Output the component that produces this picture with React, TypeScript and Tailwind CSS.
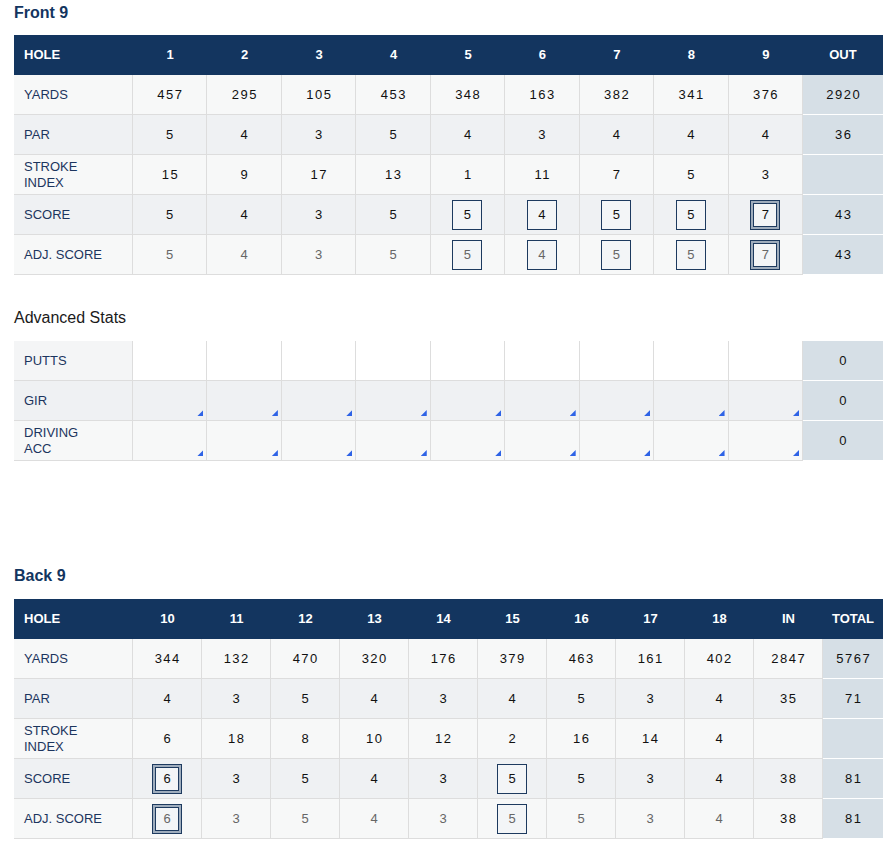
import React from "react";

const NAVY = "#13355f";

type Cell = { v?: string | number; box?: 0 | 1 | 2; tri?: boolean };

function ScoreBox({ v, kind, muted }: { v: string | number; kind: 1 | 2; muted: boolean }) {
  const txt = muted ? "text-[#666666]" : "text-[#111111]";
  if (kind === 1) {
    return (
      <div className={`w-[30px] h-[30px] border border-[#1d3a5f] bg-[#f3f5f7] flex items-center justify-center text-[13px] ${txt}`}>
        {v}
      </div>
    );
  }
  return (
    <div className="w-[30px] h-[30px] border border-[#1d3a5f] bg-[#9fadbd] p-[2px]">
      <div className={`w-full h-full border border-[#1d3a5f] bg-[#f3f5f7] flex items-center justify-center text-[13px] ${txt}`}>
        {v}
      </div>
    </div>
  );
}

function Header({ cols, labels, last }: { cols: string; labels: string[]; last: string }) {
  return (
    <div className={`grid ${cols} h-[40px] bg-[#13355f] text-white font-bold text-[13px]`}>
      <div className="flex items-center pl-[10px]">HOLE</div>
      {labels.map((l) => (
        <div key={l} className="flex items-center justify-center">{l}</div>
      ))}
      <div className="flex items-center justify-center">{last}</div>
    </div>
  );
}

function Row({
  cols,
  label,
  cells,
  total,
  dark,
  muted,
  lastShaded = true,
  extra,
  labelBg,
  cellBg,
}: {
  cols: string;
  label: React.ReactNode;
  cells: Cell[];
  total?: string | number;
  dark: boolean;
  muted?: boolean;
  lastShaded?: boolean;
  extra?: string | number | null;
  labelBg?: string;
  cellBg?: string;
}) {
  const bg = dark ? "bg-[#eff1f3]" : "bg-[#f7f8f8]";
  return (
    <div className={`grid ${cols} h-[40px]`}>
      <div
        className={`flex items-center pl-[10px] border-r border-b border-[#dddddd] text-[13px] leading-[16px] text-[#1c355e] ${labelBg ?? bg}`}
      >
        {label}
      </div>
      {cells.map((c, i) => (
        <div
          key={i}
          className={`relative flex items-center justify-center border-r border-b border-[#dddddd] ${cellBg ?? bg}`}
        >
          {c.box ? (
            <ScoreBox v={c.v ?? ""} kind={c.box as 1 | 2} muted={!!muted} />
          ) : (
            <span
              className={
                muted
                  ? "text-[13px] text-[#666666]"
                  : "text-[13px] tracking-[1.5px] pl-[1.5px] text-[#111111]"
              }
            >
              {c.v}
            </span>
          )}
          {c.tri && (
            <div
              className="absolute right-[3px] bottom-[4px] w-[6px] h-[6px] bg-[#2e63e6]"
              style={{ clipPath: "polygon(100% 0, 100% 100%, 0 100%)" }}
            />
          )}
        </div>
      ))}
      {extra !== undefined && (
        <div className={`flex items-center justify-center border-r border-b border-[#dddddd] ${bg}`}>
          <span className="text-[13px] tracking-[1.5px] pl-[1.5px] text-[#111111]">{extra}</span>
        </div>
      )}
      <div
        className={`flex items-center justify-center border-b ${
          lastShaded ? "bg-[#d6dfe6] border-white" : `${bg} border-[#dddddd]`
        }`}
      >
        <span className="text-[13px] tracking-[1.5px] pl-[1.5px] text-[#111111]">{total}</span>
      </div>
    </div>
  );
}

const vals = (arr: (string | number)[]): Cell[] => arr.map((v) => ({ v }));

export default function App() {
  const F = "grid-cols-[119px_repeat(9,minmax(0,1fr))_80px]";
  const B = "grid-cols-[119px_repeat(10,minmax(0,1fr))_60px]";

  const frontScore: Cell[] = [
    { v: 5 },
    { v: 4 },
    { v: 3 },
    { v: 5 },
    { v: 5, box: 1 },
    { v: 4, box: 1 },
    { v: 5, box: 1 },
    { v: 5, box: 1 },
    { v: 7, box: 2 },
  ];
  const backScore: Cell[] = [
    { v: 6, box: 2 },
    { v: 3 },
    { v: 5 },
    { v: 4 },
    { v: 3 },
    { v: 5, box: 1 },
    { v: 5 },
    { v: 3 },
    { v: 4 },
  ];

  const titleBold = "text-[16px] leading-[20px] font-bold text-[#13355f]";

  return (
    <div
      className="w-[893px] min-h-[848px] bg-white pl-[14px] pr-[10px] pt-[3px]"
      style={{ fontFamily: '"Liberation Sans", Arial, sans-serif' }}
    >
      <h2 className={`${titleBold} mb-[12px]`}>Front 9</h2>
      <div>
        <Header cols={F} labels={["1", "2", "3", "4", "5", "6", "7", "8", "9"]} last="OUT" />
        <Row cols={F} label="YARDS" dark={false} cells={vals([457, 295, 105, 453, 348, 163, 382, 341, 376])} total={2920} />
        <Row cols={F} label="PAR" dark cells={vals([5, 4, 3, 5, 4, 3, 4, 4, 4])} total={36} />
        <Row
          cols={F}
          label={<span>STROKE<br />INDEX</span>}
          dark={false}
          cells={vals([15, 9, 17, 13, 1, 11, 7, 5, 3])}
          total=""
        />
        <Row cols={F} label="SCORE" dark cells={frontScore} total={43} />
        <Row cols={F} label="ADJ. SCORE" dark={false} muted cells={frontScore} total={43} />
      </div>

      <h2 className="text-[16px] leading-[20px] text-[#1a1a1a] mt-[33px] mb-[13px]">Advanced Stats</h2>
      <div>
        <Row
          cols={F}
          label="PUTTS"
          dark={false}
          labelBg="bg-[#f4f5f6]"
          cellBg="bg-white"
          cells={Array.from({ length: 9 }, () => ({}))}
          total={0}
        />
        <Row cols={F} label="GIR" dark cells={Array.from({ length: 9 }, () => ({ tri: true }))} total={0} />
        <Row
          cols={F}
          label={<span>DRIVING<br />ACC</span>}
          dark={false}
          cells={Array.from({ length: 9 }, () => ({ tri: true }))}
          total={0}
        />
      </div>

      <h2 className={`${titleBold} mt-[105px] mb-[13px]`}>Back 9</h2>
      <div>
        <Header cols={B} labels={["10", "11", "12", "13", "14", "15", "16", "17", "18", "IN"]} last="TOTAL" />
        <Row cols={B} label="YARDS" dark={false} cells={vals([344, 132, 470, 320, 176, 379, 463, 161, 402])} extra={2847} total={5767} />
        <Row cols={B} label="PAR" dark cells={vals([4, 3, 5, 4, 3, 4, 5, 3, 4])} extra={35} total={71} />
        <Row
          cols={B}
          label={<span>STROKE<br />INDEX</span>}
          dark={false}
          cells={vals([6, 18, 8, 10, 12, 2, 16, 14, 4])}
          extra=""
          total=""
        />
        <Row cols={B} label="SCORE" dark cells={backScore} extra={38} total={81} />
        <Row cols={B} label="ADJ. SCORE" dark={false} muted cells={backScore} extra={38} total={81} />
      </div>
    </div>
  );
}
